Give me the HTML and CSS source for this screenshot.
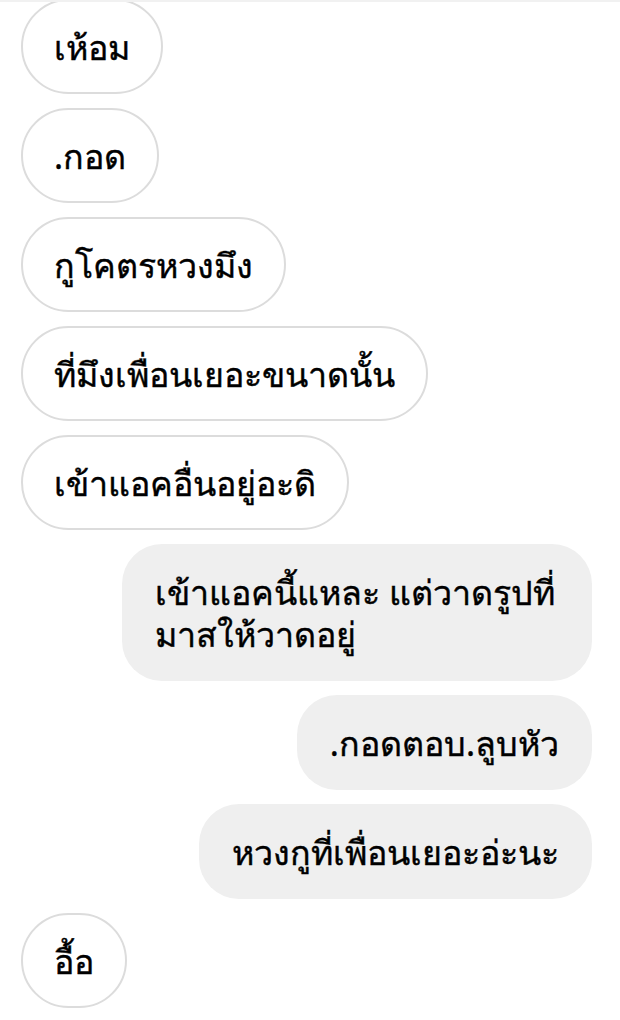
FILE: index.html
```html
<!DOCTYPE html>
<html lang="th">
<head>
<meta charset="utf-8">
<title>Chat</title>
<link rel="stylesheet" href="styles.css">
</head>
<body>
<div class="topline"></div>
<main class="thread">
  <div class="msg in">เห้อม</div>
  <div class="msg in">.กอด</div>
  <div class="msg in">กูโคตรหวงมึง</div>
  <div class="msg in">ที่มึงเพื่อนเยอะขนาดนั้น</div>
  <div class="msg in">เข้าแอคอื่นอยู่อะดิ</div>
  <div class="msg out">เข้าแอคนี้แหละ แต่วาดรูปที่มาสให้วาดอยู่</div>
  <div class="msg out">.กอดตอบ.ลูบหัว</div>
  <div class="msg out">หวงกูที่เพื่อนเยอะอ่ะนะ</div>
  <div class="msg in">อื้อ</div>
</main>
</body>
</html>
```

FILE: styles.css
```css
html, body {
  margin: 0;
  padding: 0;
  background: #ffffff;
  overflow: hidden;
}
body {
  width: 620px;
  height: 1020px;
  font-family: "Noto Sans", "DejaVu Sans", sans-serif;
  color: #000000;
}
.topline {
  height: 2px;
  background: #f1f1f1;
  position: relative;
  z-index: 1;
}
.thread {
  display: flex;
  flex-direction: column;
  gap: 14px;
  margin-top: -3px;
  padding: 0 28px 0 21px;
}
.msg {
  box-sizing: border-box;
  font-size: 34px;
  line-height: 42px;
  padding: 25.5px 32px;
  border-radius: 48px;
  border: 1px solid transparent;
  max-width: 470px;
  -webkit-text-stroke: 0.4px #000000;
}
.msg.in {
  align-self: flex-start;
  background: #ffffff;
  border: 2px solid #dcdcdc;
  padding: 24.5px 31px;
}
.msg.out {
  align-self: flex-end;
  background: #efefef;
  border-radius: 40px;
}
```
